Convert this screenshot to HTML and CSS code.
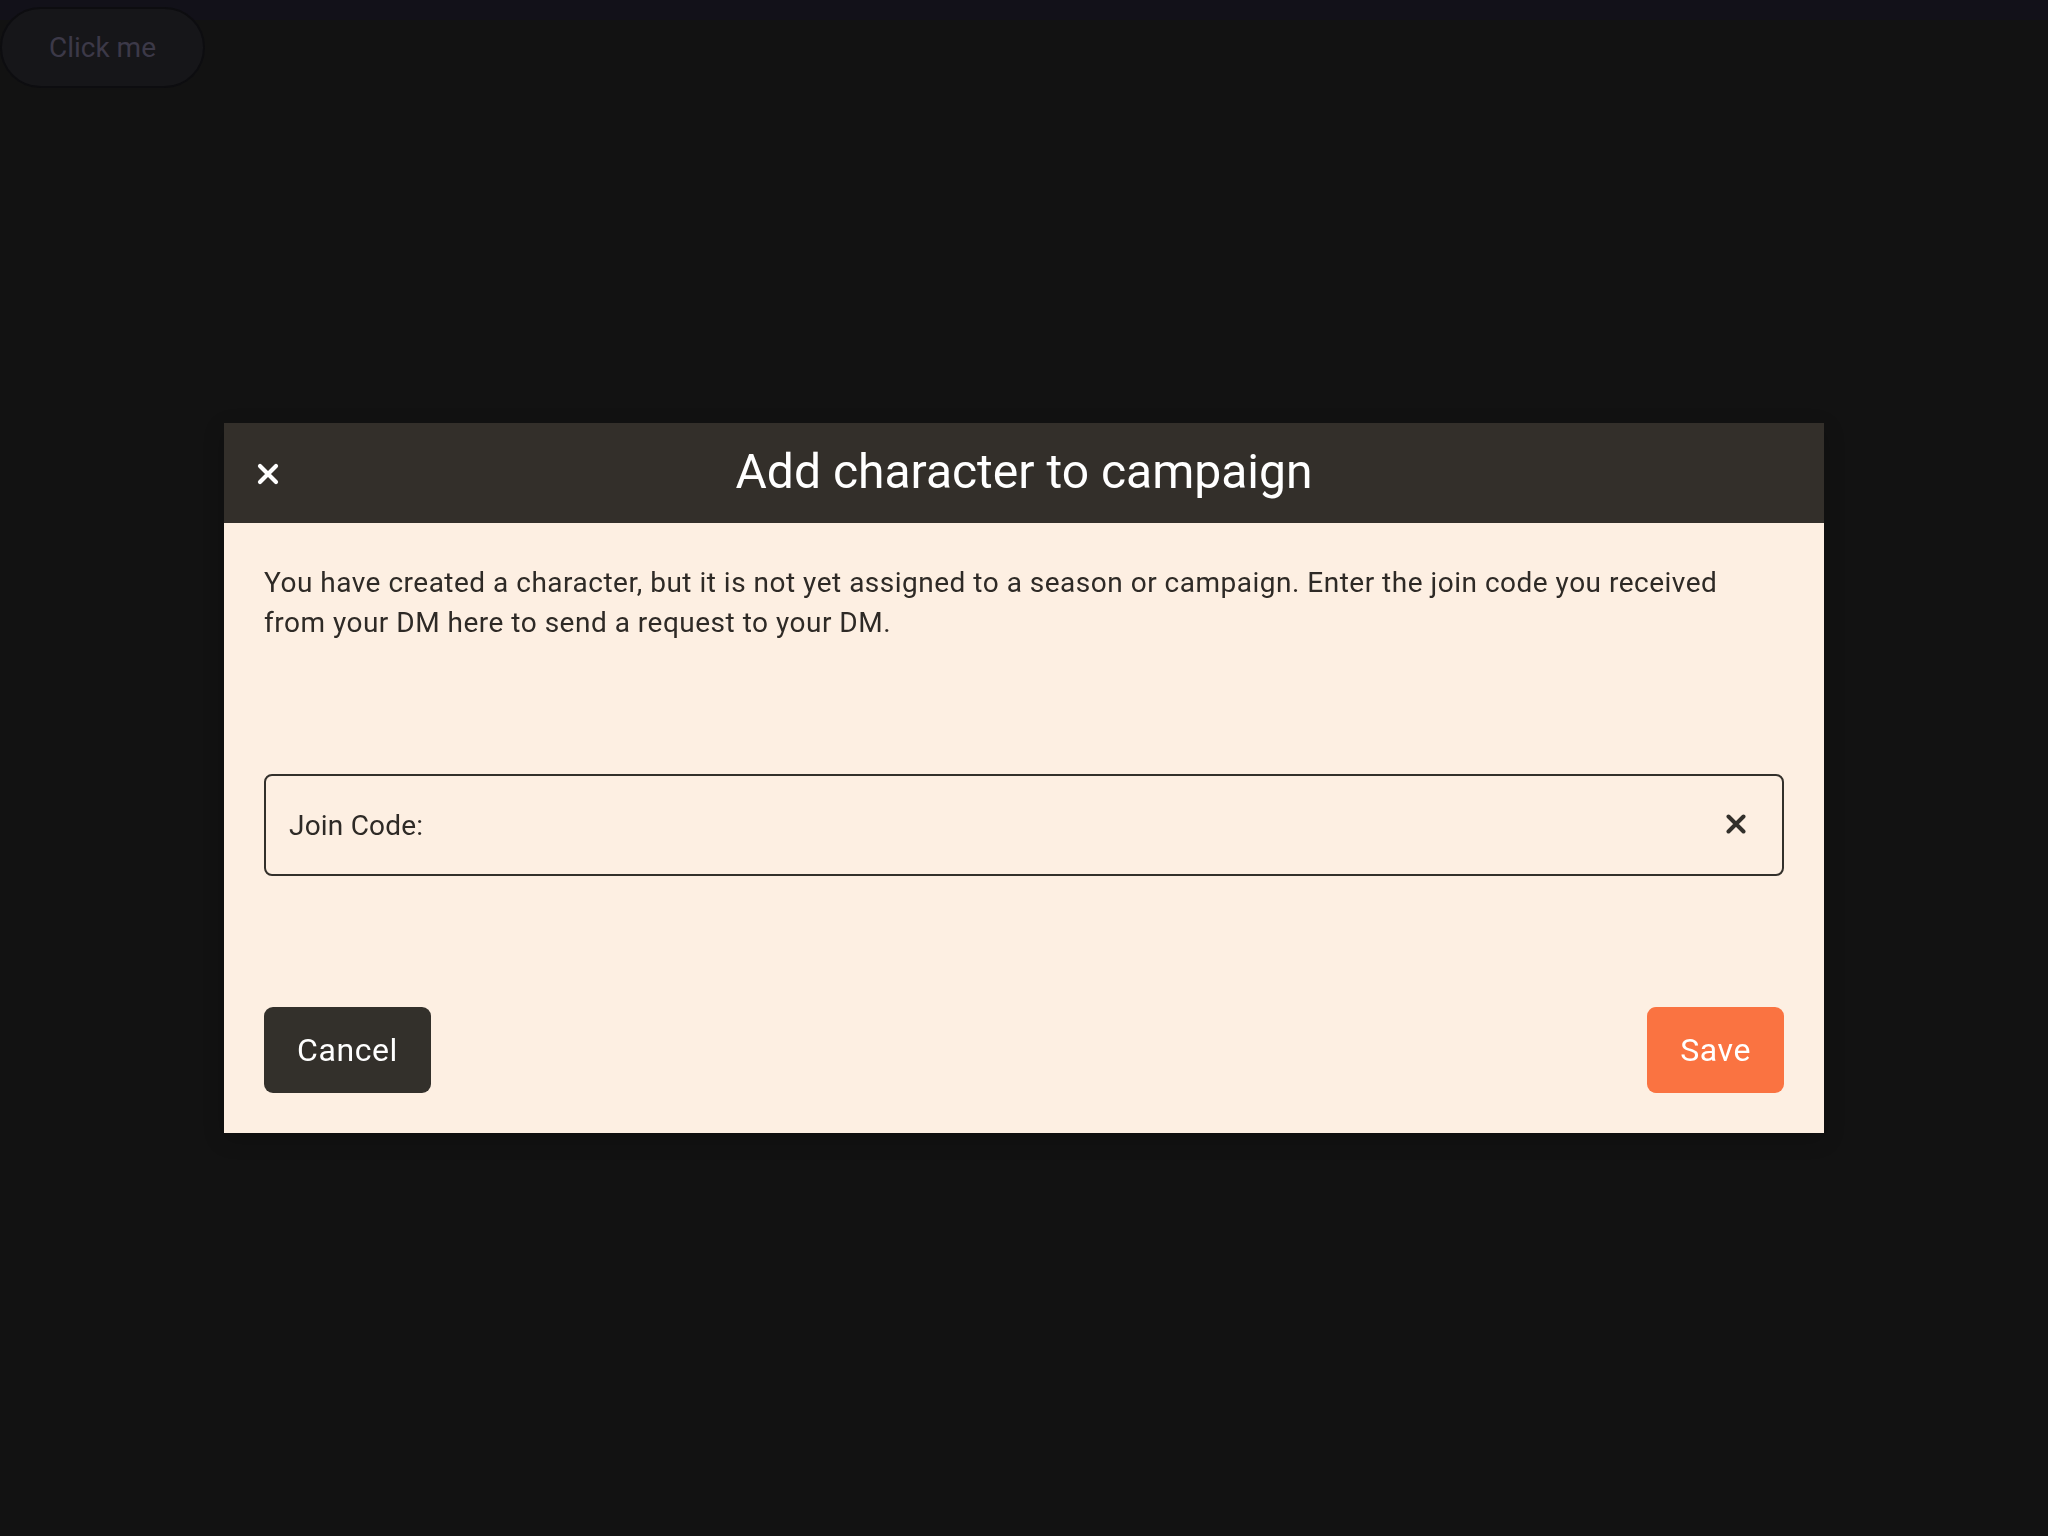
FILE: index.html
```html
<!DOCTYPE html>
<html lang="en">
<head>
<meta charset="utf-8">
<title>Add character to campaign</title>
<link rel="stylesheet" href="styles.css">
</head>
<body>
<button class="ghost-btn" type="button">Click me</button>

<div class="overlay">
  <div class="modal" role="dialog" aria-labelledby="modal-title">
    <header class="modal-header">
      <button class="icon-btn close-btn" type="button" aria-label="Close">
        <svg width="22" height="22" viewBox="0 0 22 22" aria-hidden="true">
          <path d="M3 3 L19 19 M19 3 L3 19" stroke="#ffffff" stroke-width="4.2" stroke-linecap="round" fill="none"/>
        </svg>
      </button>
      <h1 class="modal-title" id="modal-title">Add character to campaign</h1>
      <span class="spacer"></span>
    </header>
    <div class="modal-body">
      <p class="intro">You have created a character, but it is not yet assigned to a season or campaign. Enter the join code you received from your DM here to send a request to your DM.</p>
      <label class="field">
        <span class="field-label">Join Code:</span>
        <input class="field-input" type="text" aria-label="Join Code">
        <span class="clear-btn" aria-label="Clear">
          <svg width="20" height="20" viewBox="0 0 20 20" aria-hidden="true">
            <path d="M2.5 2.5 L17.5 17.5 M17.5 2.5 L2.5 17.5" stroke="#33302b" stroke-width="4" stroke-linecap="round" fill="none"/>
          </svg>
        </span>
      </label>
      <div class="actions">
        <button class="btn btn-dark" type="button">Cancel</button>
        <button class="btn btn-primary" type="button">Save</button>
      </div>
    </div>
  </div>
</div>
</body>
</html>
```

FILE: styles.css
```css
html, body {
  margin: 0;
  padding: 0;
}

body {
  width: 2048px;
  height: 1536px;
  background: linear-gradient(#121119 0, #121119 20px, #121212 20px);
  font-family: Roboto, "Noto Sans", "Liberation Sans", sans-serif;
  overflow: hidden;
}

.ghost-btn {
  display: block;
  margin: 7px 0 0 0;
  width: 205px;
  height: 81px;
  border-radius: 41px;
  border: 2px solid #0d0d10;
  background: #161619;
  color: #3c3948;
  font-family: Roboto, sans-serif;
  font-size: 28px;
  padding: 0;
  box-sizing: border-box;
}

.overlay {
  position: fixed;
  top: 20px;
  left: 0;
  right: 0;
  bottom: 0;
  display: flex;
  align-items: center;
  justify-content: center;
}

.modal {
  width: 1600px;
  background: #fdefe2;
  box-shadow: 0 6px 20px rgba(0, 0, 0, 0.2);
}

.modal-header {
  height: 100px;
  background: #332f2a;
  display: grid;
  grid-template-columns: 1fr auto 1fr;
  align-items: center;
}

.icon-btn {
  background: none;
  border: 0;
  padding: 0;
  cursor: pointer;
  display: flex;
}

.close-btn {
  justify-self: start;
  margin-left: 33px;
  margin-top: 2px;
}

.modal-title {
  margin: 0;
  color: #ffffff;
  font-weight: 400;
  font-size: 48px;
  line-height: 56px;
  letter-spacing: 0;
  margin-top: -2px;
}

.modal-body {
  padding: 40px;
  color: #2e2a26;
}

.intro {
  margin: 0;
  font-size: 28px;
  line-height: 40px;
  letter-spacing: 0.5px;
}

.field {
  margin-top: 131px;
  height: 102px;
  box-sizing: border-box;
  border: 2px solid #33302b;
  border-radius: 8px;
  display: flex;
  align-items: center;
  padding: 0 36px 0 23px;
}

.field-label {
  font-size: 28px;
  color: #2e2a26;
  letter-spacing: 0.2px;
  white-space: nowrap;
}

.field-input {
  flex: 1;
  border: 0;
  background: transparent;
  outline: none;
  font-family: inherit;
  font-size: 28px;
  color: #2e2a26;
  margin-left: 8px;
}

.clear-btn {
  display: flex;
  margin-top: -3px;
}

.actions {
  margin-top: 131px;
  display: flex;
  justify-content: space-between;
  align-items: center;
}

.btn {
  height: 86px;
  padding: 0 33px;
  border: 0;
  border-radius: 9px;
  font-family: Roboto, sans-serif;
  font-size: 32px;
  font-weight: 400;
  letter-spacing: 0.6px;
  color: #ffffff;
  cursor: pointer;
}

.btn-dark {
  background: #33302b;
}

.btn-primary {
  background: #fa7341;
}
```
